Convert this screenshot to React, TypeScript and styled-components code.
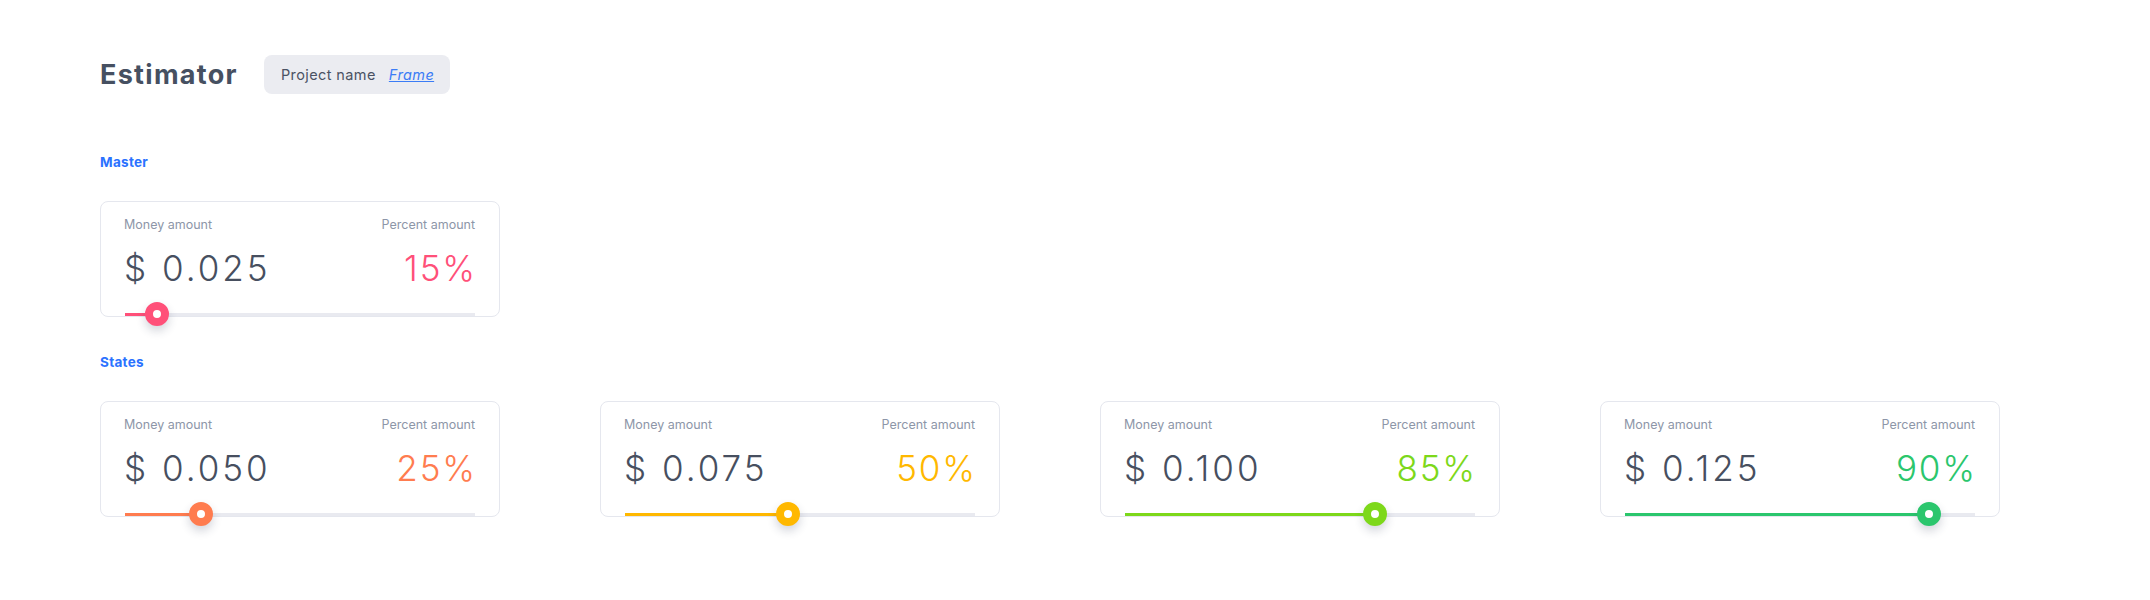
import React from "react";
import styled, { createGlobalStyle } from "styled-components";

const Global = createGlobalStyle`
  html, body { margin: 0; padding: 0; background: #ffffff; }
  body { font-family: "Inter", "Noto Sans", sans-serif; -webkit-font-smoothing: antialiased; }
`;

const Page = styled.div`
  min-height: 600px;
  box-sizing: border-box;
  padding: 55px 0 40px 100px;
  display: flex;
  flex-direction: column;
`;

const Header = styled.header`
  display: flex;
  align-items: center;
  gap: 26px;
  height: 39px;
`;

const Title = styled.h1`
  margin: 0;
  font-size: 27px;
  font-weight: 700;
  color: #465061;
  letter-spacing: 1.3px;
`;

const Pill = styled.div`
  display: flex;
  align-items: center;
  gap: 13px;
  height: 39px;
  box-sizing: border-box;
  padding: 0 16px 0 17px;
  border-radius: 8px;
  background: #ebecf1;
  font-size: 14.5px;
  letter-spacing: 0.4px;
  color: #4a5263;
`;

const FrameLink = styled.a`
  color: #3b7cf6;
  font-style: italic;
  text-decoration: underline;
`;

const SectionLabel = styled.h2<{ $top: number }>`
  margin: ${(p) => p.$top}px 0 0 0;
  font-size: 13.5px;
  line-height: 20px;
  font-weight: 700;
  letter-spacing: 0.3px;
  color: #2a72ff;
`;

const Row = styled.div`
  display: flex;
  gap: 100px;
  margin-top: 29px;
`;

const Card = styled.div`
  width: 400px;
  height: 116px;
  box-sizing: border-box;
  border: 1px solid #e5e7ee;
  border-radius: 8px;
  padding: 15px 24px 0 23px;
  display: flex;
  flex-direction: column;
`;

const LabelRow = styled.div`
  display: flex;
  justify-content: space-between;
  font-size: 12.5px;
  line-height: 16px;
  color: #8d96a8;
`;

const ValueRow = styled.div`
  display: flex;
  justify-content: space-between;
  margin-top: 15px;
  font-size: 35px;
  line-height: 40px;
  font-weight: 350;
  letter-spacing: 3px;
  color: #474f5f;
`;

const Percent = styled.span<{ $color: string }>`
  color: ${(p) => p.$color};
  letter-spacing: 1.8px;
  margin-right: -1.8px;
`;

const Track = styled.div`
  position: relative;
  margin-top: auto;
  margin-left: 1px;
  width: 350px;
  height: 3px;
  background: #e9eaf0;
`;

const Fill = styled.div<{ $color: string }>`
  position: absolute;
  left: 0;
  top: 0;
  height: 100%;
  background: ${(p) => p.$color};
`;

const Knob = styled.div<{ $color: string }>`
  position: absolute;
  top: -11px;
  width: 24px;
  height: 24px;
  margin-left: -12px;
  box-sizing: border-box;
  border-radius: 50%;
  border: 8px solid ${(p) => p.$color};
  background: #ffffff;
  box-shadow: 0 5px 10px rgba(40, 50, 80, 0.2);
  z-index: 2;
`;

type Item = { money: string; pct: string; color: string; pos: number };

const master: Item = { money: "$ 0.025", pct: "15%", color: "#ff5079", pos: 32 };
const states: Item[] = [
  { money: "$ 0.050", pct: "25%", color: "#ff7c4f", pos: 76 },
  { money: "$ 0.075", pct: "50%", color: "#ffb800", pos: 163 },
  { money: "$ 0.100", pct: "85%", color: "#7dd81a", pos: 250 },
  { money: "$ 0.125", pct: "90%", color: "#2bc66d", pos: 304 },
];

function Estimate({ item }: { item: Item }) {
  return (
    <Card>
      <LabelRow>
        <span>Money amount</span>
        <span>Percent amount</span>
      </LabelRow>
      <ValueRow>
        <span>{item.money}</span>
        <Percent $color={item.color}>{item.pct}</Percent>
      </ValueRow>
      <Track>
        <Fill $color={item.color} style={{ width: item.pos }} />
        <Knob $color={item.color} style={{ left: item.pos }} />
      </Track>
    </Card>
  );
}

export default function App() {
  return (
    <>
      <Global />
      <Page>
        <Header>
          <Title>Estimator</Title>
          <Pill>
            <span>Project name</span>
            <FrameLink>Frame</FrameLink>
          </Pill>
        </Header>
        <SectionLabel $top={58}>Master</SectionLabel>
        <Row>
          <Estimate item={master} />
        </Row>
        <SectionLabel $top={35}>States</SectionLabel>
        <Row>
          {states.map((s) => (
            <Estimate key={s.money} item={s} />
          ))}
        </Row>
      </Page>
    </>
  );
}
